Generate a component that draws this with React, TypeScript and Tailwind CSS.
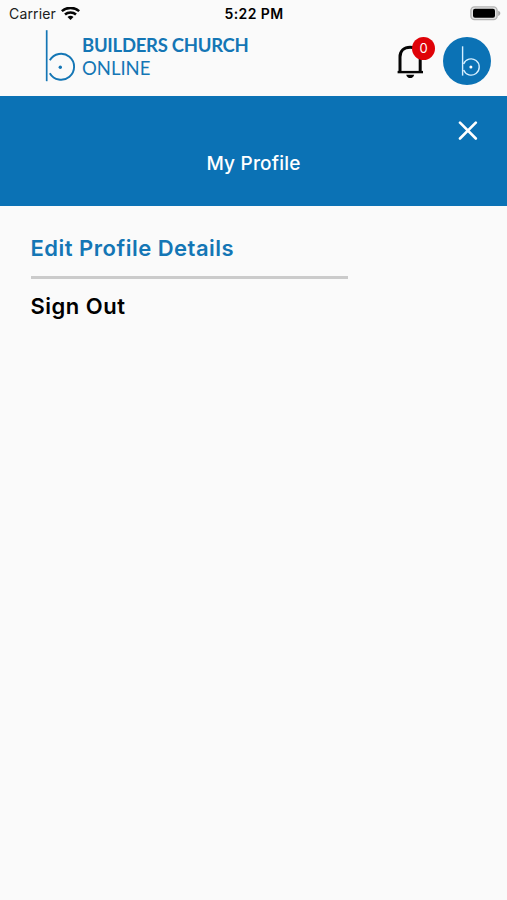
import React from "react";

function WifiIcon() {
  return (
    <svg className="ml-[5.5px] h-[15px] w-[19px]" viewBox="0 0 19 15" fill="none" stroke="#050505" strokeWidth="2.5">
      <path d="M.8 4.1C5.4-.2 13.6-.2 18.2 4.1" />
      <path d="M4 7.5C7 4.8 12 4.8 15 7.5" />
      <path d="M6.5 9.9C8.2 8.5 10.8 8.5 12.5 9.9L9.5 13Z" fill="#050505" stroke="none" />
    </svg>
  );
}

function BatteryIcon() {
  return (
    <svg className="h-[16px] w-[31px]" viewBox="0 0 31 16">
      <rect x=".9" y=".9" width="26.2" height="12.7" rx="3.6" fill="#e4e4e4" stroke="#b4b4b4" strokeWidth="1.4" />
      <rect x="3" y="2.8" width="22" height="8.9" rx="2" fill="#000" />
      <path d="M28.2 4.7C31 5.8 31 8.8 28.2 9.9Z" fill="#a8a8a8" />
    </svg>
  );
}

function LogoMark() {
  return (
    <svg className="h-[54px] w-[32px]" viewBox="0 0 32 54" fill="none" stroke="#1476b5">
      <path d="M2.7 1.2V52.2" strokeWidth="1.7" />
      <path d="M5.8 31.3A13 13 0 1 1 5.8 44.2" strokeWidth="1.9" />
      <circle cx="16.3" cy="38.2" r="1.7" fill="#1476b5" stroke="none" />
    </svg>
  );
}

function Bell() {
  return (
    <div className="relative h-[44px] w-[40px]">
      <svg className="h-[44px] w-[30px]" viewBox="0 0 30 44" fill="none" stroke="#050505" strokeWidth="3">
        <path d="M5 35V20C5 14 9 10.3 15.2 10.3S25.2 14 25.2 20V35" />
        <path d="M2.6 35.1H28" strokeWidth="2.4" />
        <path d="M11.2 37.7H19.2C18.2 42.2 12.2 42.2 11.2 37.7Z" fill="#050505" stroke="none" />
      </svg>
      <span className="absolute left-[17px] top-[-0.5px] flex h-[23px] w-[23px] items-center justify-center rounded-full bg-[#df0208] pt-px text-[13px] leading-none text-white">
        0
      </span>
    </div>
  );
}

function Avatar() {
  return (
    <div className="ml-[8px] h-[48px] w-[48px] rounded-full bg-[#0b72b5]">
      <svg className="h-[48px] w-[48px]" viewBox="0 0 48 48" fill="none" stroke="#d5efff">
        <path d="M19.6 9.3V38.6" strokeWidth="1.4" />
        <path d="M20.6 27A8.1 8.1 0 1 1 20.6 33" strokeWidth="1.4" />
        <circle cx="27.9" cy="30" r="1.5" fill="#fff" stroke="none" />
      </svg>
    </div>
  );
}

export default function App() {
  return (
    <div className="min-h-[900px] w-full bg-[#fafafa] font-['Inter',sans-serif] text-black">
      <div className="grid h-[28px] grid-cols-3 items-center pl-[7px] pr-[6px]">
        <div className="flex items-center pl-[2px] text-[14px] tracking-[0.15px] text-[#202020]">
          <span className="relative -top-px">Carrier</span>
          <WifiIcon />
        </div>
        <div className="pb-[2px] text-center text-[14px] font-semibold tracking-[0.4px]">5:22 PM</div>
        <div className="flex justify-end">
          <BatteryIcon />
        </div>
      </div>
      <header className="flex h-[68px] justify-between pl-[44px] pr-[16px]">
        <div className="flex pt-px">
          <LogoMark />
          <div className="ml-[6px] pt-[5px] font-['Lato',sans-serif] text-[18.5px] leading-[23px] text-[#1476b5]">
            <div className="font-bold tracking-[-0.28px]">BUILDERS CHURCH</div>
            <div>ONLINE</div>
          </div>
        </div>
        <div className="flex pt-[9px]">
          <Bell />
          <Avatar />
        </div>
      </header>
      <section className="flex h-[110px] flex-col bg-[#0b72b5] text-white">
        <button className="ml-auto mr-[29px] mt-[25px] h-[20px] w-[20px]" aria-label="Close">
          <svg className="h-[20px] w-[20px]" viewBox="0 0 20 20" stroke="currentColor" strokeWidth="2.6" strokeLinecap="round">
            <path d="M2 1.7L17.8 17.5M17.8 1.7L2 17.5" />
          </svg>
        </button>
        <h1 className="mt-[10px] text-center text-[19px] font-medium leading-[26px] tracking-[0.2px]">My Profile</h1>
      </section>
      <nav className="ml-[30.5px] w-[317.5px] text-[22px] font-semibold tracking-[0.5px]">
        <div className="h-[73px] border-b-[3px] border-[#cbcbcb] pt-[27px] leading-[30px] text-[#1476b5]">Edit Profile Details</div>
        <div className="pt-[12px] leading-[30px]">Sign Out</div>
      </nav>
    </div>
  );
}
